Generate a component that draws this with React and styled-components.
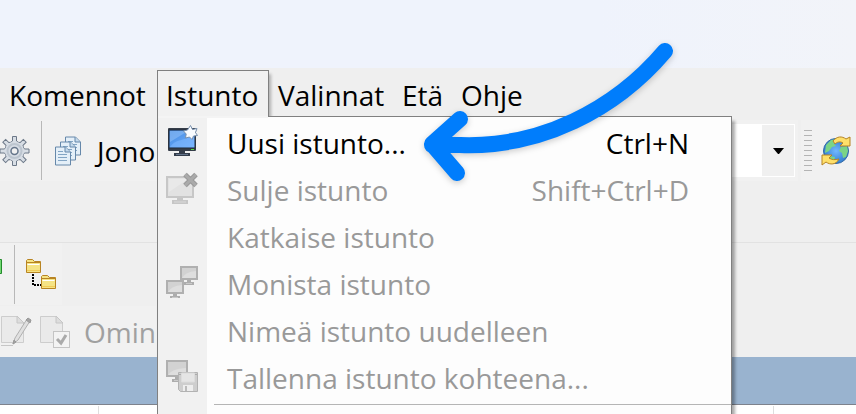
import React from "react";
import styled, { createGlobalStyle } from "styled-components";

const GlobalStyle = createGlobalStyle`
  * { box-sizing: border-box; }
  html, body { margin: 0; }
  body, button, select {
    font-family: "Open Sans", "Noto Sans", sans-serif;
    font-size: 28px;
    line-height: 40px;
    color: #000;
  }
  svg { display: block; flex: none; }
`;

const Window = styled.main`
  position: relative;
  display: flex;
  flex-direction: column;
  height: 100vh;
  overflow: hidden;
  background: #efefef;
  white-space: nowrap;
`;

const TitleArea = styled.header`
  flex: none;
  height: 68px;
  background: linear-gradient(90deg, #eff3fc 70%, #f2f4f9);
`;

const MenuBar = styled.nav`
  flex: none;
  display: flex;
  align-items: stretch;
  height: 52px;
  padding-top: 2px;
`;

const MenuSlot = styled.div`
  position: relative;
  flex: none;
  width: ${(p) => p.$width}px;
`;

const MenuButton = styled.button`
  width: 100%;
  height: 47px;
  padding: 2px 0 0 8px;
  border: 1px solid ${(p) => (p.$open ? "#808080" : "transparent")};
  border-bottom: 0;
  background: ${(p) => (p.$open ? "#f1f1f1" : "transparent")};
  box-shadow: ${(p) => (p.$open ? "3px 3px 3px -1px #0004" : "none")};
  text-align: left;
`;

const Popup = styled.div`
  position: absolute;
  z-index: 2;
  top: 46px;
  left: 0;
  width: 575px;
  padding: 3px 0 48px;
  border: 1px solid #808080;
  background: linear-gradient(90deg, #f1f1f1 49px, #fdfdfd 49px);
  box-shadow: 4px 4px 3px -1px #0005;
`;

const OpenEdge = styled.span`
  position: absolute;
  z-index: 3;
  top: 46px;
  left: 1px;
  right: 1px;
  height: 2px;
  background: #f4f4f4;
`;

const MenuItem = styled.button`
  display: grid;
  grid-template-columns: 69px 1fr auto;
  align-items: center;
  width: 100%;
  height: 47px;
  padding: 0 42px 2px 0;
  border: 0;
  background: transparent;
  color: #000;
  text-align: left;
  &:disabled { color: #999; }
`;

const IconCell = styled.span`
  align-self: start;
  padding: 5px 0 0 8px;
`;

const MenuSeparator = styled.hr`
  height: 1px;
  margin: 2px 0 0 56px;
  border: 0;
  background: #b5b5b5;
`;

const ToolRow = styled.div`
  flex: none;
  display: flex;
  gap: 3px;
  height: ${(p) => p.$height}px;
  border-bottom: ${(p) => (p.$ruled ? "1px solid #e2e2e2" : "0")};
`;

const ToolGroup = styled.div`
  display: flex;
  align-items: center;
  height: ${(p) => p.$height}px;
  flex: ${(p) => (p.$grow ? "1" : "none")};
  min-width: 0;
  padding-right: ${(p) => p.$end || 0}px;
  background: #f1f1f1;
`;

const ToolButton = styled.button`
  display: flex;
  align-items: center;
  flex: none;
  gap: ${(p) => p.$gap || 0}px;
  padding: 0 0 0 ${(p) => p.$start || 0}px;
  border: 0;
  background: transparent;
  &:disabled { color: #a0a0a0; }
`;

const Divider = styled.span`
  width: 1px;
  height: 59px;
  margin-left: ${(p) => p.$start}px;
  background: #b8b8b8;
`;

const Combo = styled.label`
  flex: 1;
  display: grid;
  grid-template-columns: 1fr 32px;
  height: 53px;
  margin-left: 12px;
  border: 1px solid #fff;
  background: #fff;
`;

const ComboSelect = styled.select`
  grid-area: 1 / 1 / 2 / 3;
  appearance: none;
  min-width: 0;
  border: 0;
  background: transparent;
`;

const ComboArrow = styled.span`
  grid-area: 1 / 2;
  display: grid;
  place-items: center;
  background: #f0f0f0;
  pointer-events: none;
`;

const Grip = styled.span`
  width: 8px;
  height: 41px;
  margin: 0 9px 0 3px;
  background: repeating-linear-gradient(#b4b4b4 0 1px, transparent 1px 5px);
`;

const SessionHeader = styled.div`
  flex: none;
  height: 48px;
  background: #99b3cf;
  border-bottom: 1px solid #7d828c;
`;

const Listing = styled.section`
  flex: 1;
  display: flex;
  justify-content: space-between;
  padding: 1px 82px 0 98px;
  background: #fff;
`;

const ColumnEdge = styled.span`
  width: 1px;
  background: #dedede;
`;

const Pointer = styled.svg`
  position: absolute;
  z-index: 4;
  top: 30px;
  left: 410px;
  pointer-events: none;
  filter: drop-shadow(0 2px 3px #0003);
`;

function Icon({ width = 32, height = 32, children }) {
  return (
    <svg width={width} height={height} viewBox={`0 0 ${width} ${height}`} aria-hidden="true">
      {children}
    </svg>
  );
}

function NewSessionIcon() {
  return (
    <Icon>
      <defs>
        <linearGradient id="screen" x1="0" y1="0" x2="1" y2="1">
          <stop offset="0" stopColor="#4288e0" />
          <stop offset="1" stopColor="#73b2ff" />
        </linearGradient>
      </defs>
      <rect x="2" y="3" width="28" height="23" rx="1" fill="#353d49" />
      <rect x="3" y="5" width="26" height="18" fill="url(#screen)" stroke="#252d3a" />
      <path d="M4 6h18L4 17z" fill="#8fbef5" opacity=".6" />
      <path d="M4 22C10 13 18 17 28 9v13z" fill="#7eb8ff" opacity=".6" />
      <path d="M25 24.5h3" stroke="#5cdb45" />
      <path d="M13 26h6v2h5v3H8v-3h5z" fill="#343d4b" />
      <path d="M10 29.5h12" stroke="#64758c" />
      <path d="M24.500 .5l2 4 4.500-1-1.500 4 2 3-4 .5-1.500 3.500-2.500-2.500-4 1 .7-4-2.700-3 4-1z" fill="#f8fbff" stroke="#7890ad" />
    </Icon>
  );
}

function CloseSessionIcon() {
  return (
    <Icon>
      <rect x="1" y="5" width="26" height="20" fill="#e2e2e2" stroke="#c7c7c7" strokeWidth="2" />
      <path d="M3 7h19L3 20z" fill="#e9e9e9" />
      <path d="M11 26h6v2h5v4H6v-4h5z" fill="#c6c6c6" />
      <path d="M8 30h12" stroke="#dadada" />
      <path d="M19 2.500l11 11M30 2.500l-11 11" stroke="#999" strokeWidth="5" />
      <path d="M19 2.500l11 11M30 2.500l-11 11" stroke="#aaa" strokeWidth="3" />
    </Icon>
  );
}

function GreyMonitor({ x, y, w = 16, h = 12 }) {
  const mid = x + w / 2;
  return (
    <g>
      <rect x={x} y={y} width={w} height={h} fill="#d2d2d2" stroke="#b0b0b0" strokeWidth="2" />
      <path d={`M${x + 1} ${y + h - 1}q3-6 ${w - 2}-7v7z`} fill="#dedede" />
      <path d={`M${mid - 2} ${y + h + 1}h4v2h3v3h-10v-3h3z`} fill="#adadad" />
      <path d={`M${mid - 3} ${y + h + 4.5}h6`} stroke="#cacaca" />
    </g>
  );
}

function DuplicateIcon() {
  return (
    <Icon>
      <GreyMonitor x={15} y={1} />
      <GreyMonitor x={1} y={15} />
    </Icon>
  );
}

function SaveSessionIcon() {
  return (
    <Icon>
      <GreyMonitor x={1} y={1} w={20} h={15} />
      <path d="M12.500 12.500h19v19h-17l-2-2z" fill="#cecece" stroke="#b2b2b2" />
      <path d="M15.500 13h13v9h-13z" fill="#e5e5e5" stroke="#dcdcdc" />
      <path d="M17 31v-6h10v6z" fill="#eee" />
      <path d="M19 26h2v5h-2z" fill="#bbb" />
      <path d="M14 14v1M30 14v1" stroke="#888" />
    </Icon>
  );
}

function GearIcon() {
  const teeth = [0, 45, 90, 135, 180, 225, 270, 315];
  return (
    <Icon width={30} height={30}>
      {teeth.map((a) => (
        <path key={a} d="M10.500 6.500l2-1.500V.500h4V5l2 1.500" transform={`rotate(${a} 14.500 15)`} fill="#d8dee5" stroke="#6c7888" />
      ))}
      <circle cx="14.500" cy="15" r="9.500" fill="#d6dce4" />
      <circle cx="14.500" cy="15" r="7" fill="none" stroke="#bcc5cf" strokeWidth="2" />
      <circle cx="14.500" cy="15" r="3.500" fill="#f1f1f1" stroke="#66768b" strokeWidth="1.500" />
    </Icon>
  );
}

function QueueIcon() {
  return (
    <Icon width={28} height={30}>
      {[[11, 1], [6, 6], [1, 11]].map(([x, y]) => (
        <g key={x} transform={`translate(${x} ${y})`}>
          <path d="M.500 0h10l5 5v13H.500z" fill="#e4eff8" stroke="#6688aa" />
          <path d="M10 0v5h5" fill="#c3d9ec" stroke="#6688aa" />
          <path d="M3 4.500h5M3 7.500h9M3 10.500h9M3 13.500h9" stroke="#83a5c4" />
        </g>
      ))}
    </Icon>
  );
}

function GlobeIcon() {
  return (
    <Icon width={30} height={30}>
      <defs>
        <radialGradient id="sea">
          <stop offset="0" stopColor="#72b8ff" />
          <stop offset="1" stopColor="#347ed0" />
        </radialGradient>
      </defs>
      <circle cx="15" cy="15" r="12.500" fill="url(#sea)" stroke="#3168a5" />
      <path d="M5 9l5-5 6-1-3 5 2 2-4 1-3 4-4 2zM20 11l6-1 1 5-2 6-3 1-1-5-3-2zM9 20l5 1-1 4-4-1z" fill="#7bd486" />
      <path d="M12 5C16 0 21 0 25 3l4-2v9H19l3-3c-3-2-6-1-8 1z" fill="#ffe06a" stroke="#b58324" />
      <path d="M18 23c-3 6-9 6-13 3l-4 3V19h10l-3 3c3 2 6 2 10 1z" fill="#ffe06a" stroke="#b58324" />
    </Icon>
  );
}

function TreeIcon() {
  return (
    <Icon width={31} height={31}>
      {[[0, 0], [15, 16]].map(([x, y]) => (
        <g key={x} transform={`translate(${x} ${y})`}>
          <path d="M.500 13.500V1.500l1-1h5l2 2h6v11z" fill="#f5e384" stroke="#b88423" />
          <path d="M1 3.500h13" stroke="#b88423" />
          <path d="M1.500 5.500h12" stroke="#fff" />
          <path d="M1 11.500h13" stroke="#f1ca55" />
        </g>
      ))}
      <path d="M7 15v11h8" fill="none" stroke="#000" strokeWidth="2" strokeDasharray="2 1" />
    </Icon>
  );
}

function Page({ x }) {
  return (
    <g transform={`translate(${x} 0)`}>
      <path d="M.500.500h16l6 6v20H.500z" fill="#eaeaea" stroke="#cdcdcd" />
      <path d="M16 0v7h7z" fill="#ddd" stroke="#c6c6c6" />
    </g>
  );
}

function EditIcon() {
  return (
    <Icon>
      <Page x={1} />
      <path d="M1 29.500h12" stroke="#c6c6c6" />
      <path d="M13 28l2-6L27 3l3 2-12 19z" fill="#e0e0e0" stroke="#b0b0b0" />
      <path d="M26 4l2-2 3 2-1 3zM13 28l1-4 2 2z" fill="#a4a4a4" stroke="#999" />
    </Icon>
  );
}

function CheckIcon() {
  return (
    <Icon>
      <Page x={0} />
      <rect x="13.500" y="15.500" width="16" height="16" fill="#f3f3f3" stroke="#c4c4c4" />
      <path d="M17 23l4 4 5-8" fill="none" stroke="#aaa" strokeWidth="3" />
    </Icon>
  );
}

const sessionItems = [
  { label: "Uusi istunto...", keys: "Ctrl+N", icon: <NewSessionIcon />, enabled: true },
  { label: "Sulje istunto", keys: "Shift+Ctrl+D", icon: <CloseSessionIcon /> },
  { label: "Katkaise istunto" },
  { label: "Monista istunto", icon: <DuplicateIcon /> },
  { label: "Nimeä istunto uudelleen" },
  { label: "Tallenna istunto kohteena...", icon: <SaveSessionIcon /> },
];

const menus = [
  { label: "Komennot", width: 157 },
  { label: "Istunto", width: 112, items: sessionItems },
  { label: "Valinnat", width: 124 },
  { label: "Etä", width: 59 },
  { label: "Ohje", width: 80 },
];

export default function App() {
  return (
    <Window>
      <GlobalStyle />
      <TitleArea />
      <MenuBar>
        {menus.map((menu) => (
          <MenuSlot key={menu.label} $width={menu.width}>
            <MenuButton $open={!!menu.items}>{menu.label}</MenuButton>
            {menu.items && (
              <>
                <Popup>
                  {menu.items.map((item) => (
                    <MenuItem key={item.label} disabled={!item.enabled}>
                      <IconCell>{item.icon}</IconCell>
                      <span>{item.label}</span>
                      <span>{item.keys}</span>
                    </MenuItem>
                  ))}
                  <MenuSeparator />
                </Popup>
                <OpenEdge />
              </>
            )}
          </MenuSlot>
        ))}
      </MenuBar>

      <ToolRow $height={123} $ruled>
        <ToolGroup $height={61} $grow $end={3}>
          <ToolButton aria-label="Asetukset"><GearIcon /></ToolButton>
          <Divider $start={11} />
          <ToolButton $start={12} $gap={15}><QueueIcon />Jono</ToolButton>
          <Combo>
            <ComboSelect aria-label="Jono" />
            <ComboArrow>
              <Icon width={11} height={6}><path d="M0 0h11L6 6H5z" /></Icon>
            </ComboArrow>
          </Combo>
        </ToolGroup>
        <ToolGroup $height={61} $end={5}>
          <Grip />
          <ToolButton aria-label="Synkronoi"><GlobeIcon /></ToolButton>
        </ToolGroup>
      </ToolRow>

      <ToolRow $height={63}>
        <ToolGroup $height={62} $end={5}>
          <Icon width={2} height={30}><path d="M0 .500h1.500v14H0" fill="#72d872" stroke="#238b2b" /></Icon>
          <Divider $start={12} />
          <ToolButton $start={11} aria-label="Kansiopuu"><TreeIcon /></ToolButton>
        </ToolGroup>
      </ToolRow>

      <ToolRow $height={51}>
        <ToolGroup $height={51}>
          <ToolButton disabled aria-label="Muokkaa"><EditIcon /></ToolButton>
          <ToolButton disabled $start={8} $gap={12}><CheckIcon />Omin</ToolButton>
        </ToolGroup>
      </ToolRow>

      <SessionHeader />
      <Listing>
        <ColumnEdge />
        <ColumnEdge />
      </Listing>

      <Pointer width="275" height="165" viewBox="410 30 275 165" fill="none" stroke="#007dfc" strokeWidth="16" strokeLinecap="round" strokeLinejoin="round" aria-hidden="true">
        <path d="M432 145H460C540 148 615 110 665 51M460 119L432 144 457 173" />
      </Pointer>
    </Window>
  );
}
